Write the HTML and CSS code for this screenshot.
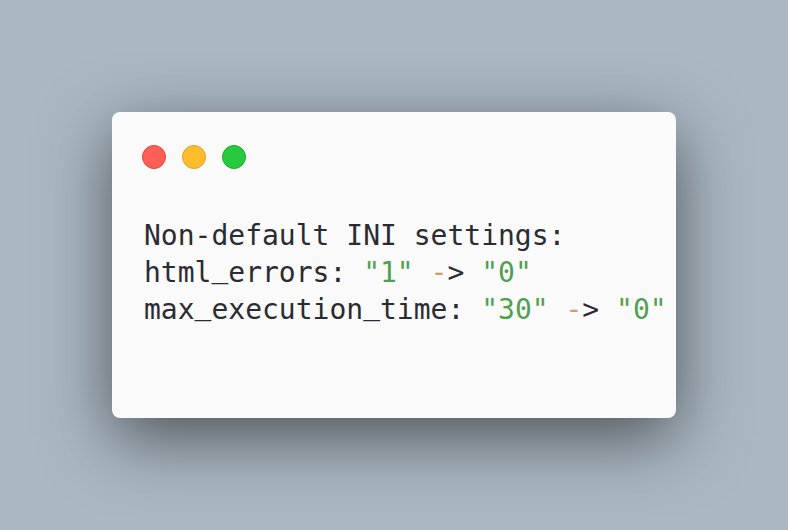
FILE: index.html
```html
<!DOCTYPE html>
<html>
<head>
<meta charset="utf-8">
<link rel="stylesheet" href="styles.css">
</head>
<body>
<div class="stage">
  <div class="window">
    <div class="controls">
      <span class="dot red"></span>
      <span class="dot yellow"></span>
      <span class="dot green"></span>
    </div>
    <div class="code">
      <div class="line">Non-default INI settings:</div>
      <div class="line">html<span class="us">_</span>errors: <span class="str">"1"</span> <span class="op">-</span>&gt; <span class="str">"0"</span></div>
      <div class="line">max<span class="us">_</span>execution<span class="us">_</span>time: <span class="str">"30"</span> <span class="op">-</span>&gt; <span class="str">"0"</span></div>
    </div>
  </div>
</div>
</body>
</html>
```
FILE: styles.css
```css
html, body {
  margin: 0;
  padding: 0;
  width: 788px;
  height: 530px;
  overflow: hidden;
  background: #abb8c3;
}
.stage {
  padding: 112px;
  display: flex;
}
.window {
  width: 564px;
  height: 306px;
  box-sizing: border-box;
  background: #fafafa;
  border-radius: 8px;
  box-shadow: 0 20px 68px rgba(0, 0, 0, 0.55);
  padding: 33px 0 0 30px;
}
.controls {
  display: flex;
  gap: 16px;
  height: 24px;
}
.dot {
  width: 24px;
  height: 24px;
  box-sizing: border-box;
  border-radius: 50%;
  border: 1px solid;
}
.red { background: #ff5f56; border-color: #e0443e; }
.yellow { background: #ffbd2e; border-color: #dea123; }
.green { background: #27c93f; border-color: #1aab29; }
.code {
  margin: 48px 0 0 2px;
  font-family: "DejaVu Sans Mono", monospace;
  font-size: 28px;
  line-height: 37px;
  color: #2a2c32;
}
.line {
  white-space: pre;
  height: 37px;
}
.us {
  vertical-align: 5px;
  line-height: 1;
}
.str { color: #50a14f; }
.op { color: #d49a6a; }
```
